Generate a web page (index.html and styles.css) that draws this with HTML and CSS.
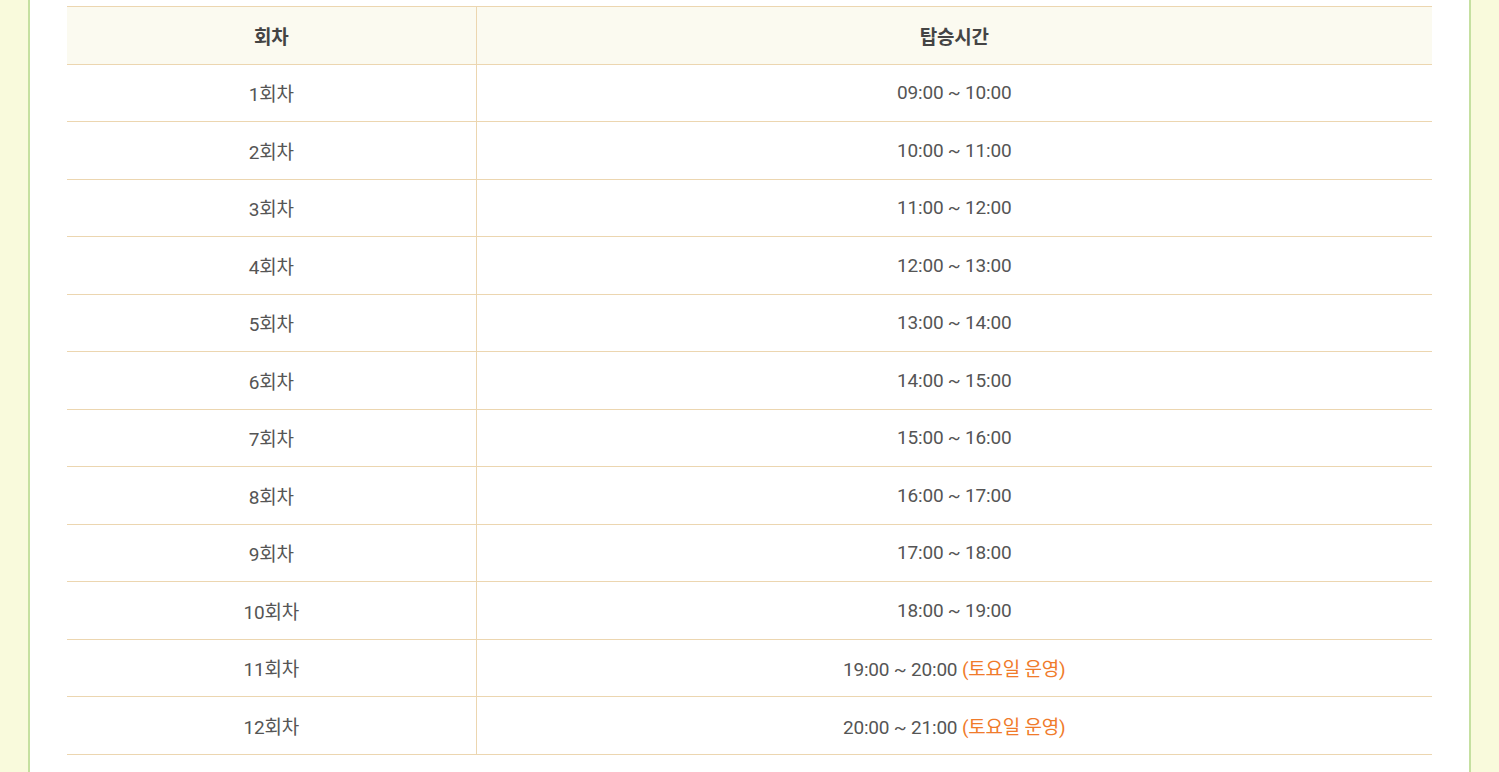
FILE: index.html
```html
<!DOCTYPE html>
<html lang="ko">
<head>
<meta charset="utf-8">
<link rel="stylesheet" href="styles.css">
</head>
<body>
<div class="page">
  <div class="panel">
    <table class="schedule">
      <colgroup><col class="c1"><col class="c2"></colgroup>
      <thead>
        <tr><th>회차</th><th>탑승시간</th></tr>
      </thead>
      <tbody>
        <tr><td>1회차</td><td>09:00 ~ 10:00</td></tr>
        <tr><td>2회차</td><td>10:00 ~ 11:00</td></tr>
        <tr><td>3회차</td><td>11:00 ~ 12:00</td></tr>
        <tr><td>4회차</td><td>12:00 ~ 13:00</td></tr>
        <tr><td>5회차</td><td>13:00 ~ 14:00</td></tr>
        <tr><td>6회차</td><td>14:00 ~ 15:00</td></tr>
        <tr><td>7회차</td><td>15:00 ~ 16:00</td></tr>
        <tr><td>8회차</td><td>16:00 ~ 17:00</td></tr>
        <tr><td>9회차</td><td>17:00 ~ 18:00</td></tr>
        <tr><td>10회차</td><td>18:00 ~ 19:00</td></tr>
        <tr><td>11회차</td><td>19:00 ~ 20:00 <span class="note">(토요일 운영)</span></td></tr>
        <tr><td>12회차</td><td>20:00 ~ 21:00 <span class="note">(토요일 운영)</span></td></tr>
      </tbody>
    </table>
  </div>
</div>
</body>
</html>
```
FILE: styles.css
```css
html, body {
  margin: 0;
  padding: 0;
  background: #f9fadc;
  height: 100%;
  overflow: hidden;
}
.page {
  padding: 0 28px 0 28px;
  height: 100%;
}
.panel {
  background: #ffffff;
  border-left: 2px solid #c5e0a0;
  border-right: 2px solid #c5e0a0;
  padding: 6px 37px 0 37px;
  height: 100%;
  box-sizing: border-box;
}
.schedule {
  width: 100%;
  border-collapse: collapse;
  table-layout: fixed;
  font-family: "Roboto", "Noto Sans CJK KR", sans-serif;
  font-size: 19px;
  color: #555555;
  letter-spacing: -0.2px;
}
.c1 { width: 409px; }
.schedule th,
.schedule td {
  border-top: 1px solid #ecd6b0;
  border-bottom: 1px solid #ecd6b0;
  text-align: center;
  padding: 0;
  height: 56.5px;
}
.schedule th + th,
.schedule td + td {
  border-left: 1px solid #ecd6b0;
}
.schedule th {
  background: #fbfaf0;
  font-weight: 700;
  color: #444444;
}
.note {
  color: #f07b2b;
}
```
